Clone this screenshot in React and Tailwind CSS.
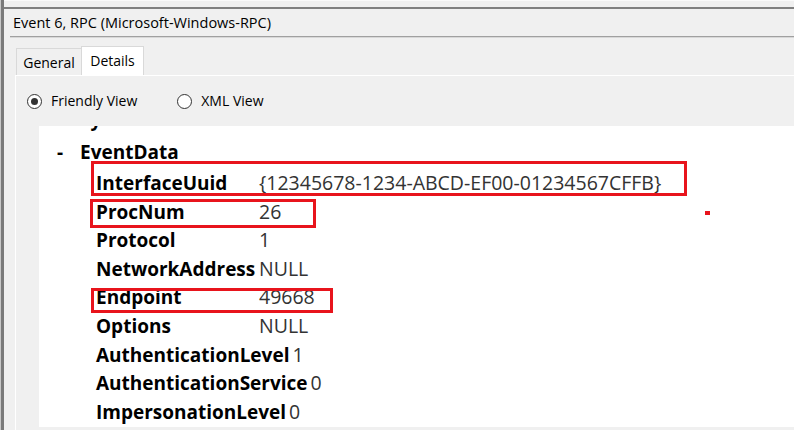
import React from "react";

const rows = [
  { k: "InterfaceUuid", v: "{12345678-1234-ABCD-EF00-01234567CFFB}" },
  { k: "ProcNum", v: "26" },
  { k: "Protocol", v: "1" },
  { k: "NetworkAddress", v: "NULL" },
  { k: "Endpoint", v: "49668" },
  { k: "Options", v: "NULL" },
  { k: "AuthenticationLevel", v: "1" },
  { k: "AuthenticationService", v: "0" },
  { k: "ImpersonationLevel", v: "0" },
];

function Radio({ checked, label, className }) {
  return (
    <div className={"flex items-center " + (className || "")}>
      <div className="w-[15px] h-[15px] rounded-full border border-[#333] bg-white flex items-center justify-center">
        {checked && <div className="w-[7px] h-[7px] rounded-full bg-[#333]" />}
      </div>
      <span className="ml-[9px] text-[14px] text-black leading-none">{label}</span>
    </div>
  );
}

export default function App() {
  return (
    <div
      className="w-[794px] h-[430px] bg-[#f0f0f0] flex overflow-hidden"
      style={{ fontFamily: '"Open Sans", "Noto Sans", sans-serif' }}
    >
      {/* left window edge */}
      <div className="w-[4px] h-full flex">
        <div className="w-[1px] bg-[#c8c8c8]" />
        <div className="w-[3px] bg-[#7a7a7a]" />
      </div>

      <div className="flex-1 flex flex-col min-w-0">
        <div className="h-[7px] border-t border-[#fafafa]" />
        <div className="h-[2px] bg-[#808080]" />
        {/* title */}
        <div className="h-[27px] pl-[9px] flex items-center text-[14.5px] text-black whitespace-nowrap">
          Event 6, RPC (Microsoft-Windows-RPC)
        </div>
        <div className="ml-[6px] h-[2px] bg-[#a0a0a0] border-b border-[#d8d8d8]" />

        {/* tabs */}
        <div className="ml-[11px] flex-1 flex flex-col">
          <div className="h-[37px] flex items-end pl-[1px]">
            <div className="h-[27px] w-[65px] border-t border-l border-[#d9d9d9] bg-[#f0f0f0] flex items-center justify-center text-[14px] text-black">
              General
            </div>
            <div className="h-[29px] w-[63px] border-t border-l border-r border-[#d9d9d9] bg-white flex items-start pt-[3px] justify-center text-[14px] text-black">
              Details
            </div>
          </div>
          <div className="flex-1 flex flex-col border-l border-t border-white">
            <div className="h-[50px] flex items-center pl-[11px]">
              <Radio checked label="Friendly View" />
              <Radio label="XML View" className="ml-[40px]" />
            </div>
            <div className="h-[301px] ml-[23px] bg-white relative overflow-hidden">
              <div className="flex flex-col mt-[-25px]">
                <div className="h-[36px] leading-[36px] flex text-[19px] font-bold text-black">
                  <span className="ml-[18px] w-[23px]">-</span>
                  <span>System</span>
                </div>
                <div className="h-[32px] leading-[30px] flex text-[19px] font-bold text-black">
                  <span className="ml-[18px] w-[23px]">-</span>
                  <span>EventData</span>
                </div>
                {rows.map((r) => (
                  <div key={r.k} className="h-[28.6px] leading-[28.6px] flex whitespace-nowrap pl-[57px]">
                    <span className="font-bold text-black text-[19px] min-w-[160px] mr-[3px]">{r.k}</span>
                    <span className="text-[#333] text-[19.5px]">{r.v}</span>
                  </div>
                ))}
              </div>

              {/* annotation boxes */}
              <div className="absolute left-[52px] top-[35px] w-[596px] h-[35px] border-[3px] border-[#e8141c]" />
              <div className="absolute left-[51px] top-[73px] w-[226px] h-[29px] border-[3px] border-[#e8141c]" />
              <div className="absolute left-[52px] top-[162px] w-[242px] h-[25px] border-[3px] border-[#e8141c]" />
              <div className="absolute left-[666px] top-[85px] w-[5px] h-[4px] bg-[#e8141c]" />
            </div>
          </div>
        </div>
      </div>
    </div>
  );
}
